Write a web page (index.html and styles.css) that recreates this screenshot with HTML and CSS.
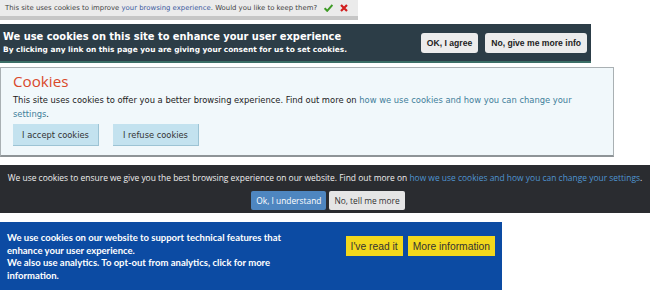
FILE: index.html
```html
<!DOCTYPE html>
<html lang="en">
<head>
    <meta charset="UTF-8">
    <meta name="viewport" content="width=device-width, initial-scale=1.0">
    <title>Cookie Banners</title>
    <link rel="stylesheet" href="styles.css">
</head>
<body>
    <div class="keep-bar">
        <span>This site uses cookies to improve <a href="#">your browsing experience</a>. Would you like to keep them?</span>
        <svg class="keep-icon" width="9" height="8" viewBox="0 0 9 8"><path d="M0.6 4.2 L3.2 6.8 L8.4 1" fill="none" stroke="#3d9b25" stroke-width="2"/></svg>
        <svg class="keep-icon" width="8" height="8" viewBox="0 0 8 8"><path d="M1 1 L7 7 M7 1 L1 7" fill="none" stroke="#d21f1f" stroke-width="2.2"/></svg>
    </div>

    <div class="slate-bar">
        <div class="slate-text">
            <h2>We use cookies on this site to enhance your user experience</h2>
            <p>By clicking any link on this page you are giving your consent for us to set cookies.</p>
        </div>
        <button class="slate-btn">OK, I agree</button>
        <button class="slate-btn">No, give me more info</button>
    </div>

    <div class="panel">
        <h2>Cookies</h2>
        <p>This site uses cookies to offer you a better browsing experience. Find out more on <a href="#">how we use cookies and how you can change your settings</a>.</p>
        <div class="panel-actions">
            <button class="panel-btn">I accept cookies</button>
            <button class="panel-btn">I refuse cookies</button>
        </div>
    </div>

    <div class="dark-bar">
        <p>We use cookies to ensure we give you the best browsing experience on our website. Find out more on <a href="#">how we use cookies and how you can change your settings</a>.</p>
        <div class="dark-actions">
            <button class="dark-btn dark-btn-ok">Ok, I understand</button>
            <button class="dark-btn">No, tell me more</button>
        </div>
    </div>

    <div class="blue-bar">
        <div class="blue-text">
            <p>We use cookies on our website to support technical features that enhance your user experience.</p>
            <p>We also use analytics. To opt-out from analytics, click for more information.</p>
        </div>
        <button class="blue-btn">I've read it</button>
        <button class="blue-btn">More information</button>
    </div>
</body>
</html>
```

FILE: styles.css
```css
html, body {
    margin: 0;
    background-color: #ffffff;
}

button {
    font-family: inherit;
    cursor: pointer;
    white-space: nowrap;
    flex-shrink: 0;
}

/* top strip */
.keep-bar {
    width: 358px;
    height: 20px;
    box-sizing: border-box;
    padding-left: 5px;
    background-color: #ebebeb;
    border-bottom: 4px solid #c6c6c6;
    display: flex;
    align-items: center;
    white-space: nowrap;
    font-family: "DejaVu Sans", sans-serif;
    font-size: 6.9px;
    color: #444;
}

.keep-bar a {
    color: #3b5aa0;
    text-decoration: none;
}

.keep-icon {
    flex-shrink: 0;
    margin-left: 7px;
}

/* slate banner */
.slate-bar {
    width: 591px;
    height: 39px;
    margin-top: 4px;
    box-sizing: border-box;
    padding-left: 3px;
    padding-right: 4px;
    background-color: #2c3d47;
    border-bottom: 2px solid #3b6e66;
    display: flex;
    align-items: center;
    gap: 7px;
    font-family: "DejaVu Sans", sans-serif;
    color: #fff;
}

.slate-text {
    flex: 1;
}

.slate-text h2 {
    margin: 0;
    font-size: 9.9px;
    line-height: 14px;
}

.slate-text p {
    margin: 0;
    font-size: 7.4px;
    font-weight: bold;
    line-height: 12px;
    white-space: nowrap;
}

.slate-btn {
    height: 20px;
    padding: 0 6px;
    border: none;
    border-radius: 3px;
    background-color: #ececec;
    color: #222;
    font-family: "Liberation Sans", Arial, sans-serif;
    font-weight: bold;
    font-size: 8.6px;
}

/* light panel */
.panel {
    width: 614px;
    height: 90px;
    margin-top: 4px;
    box-sizing: border-box;
    padding: 2px 12px 0 12px;
    background-color: #f1f8fb;
    border: 1px solid #a9b0b3;
    border-bottom: 2px solid #8e9497;
    font-family: "DejaVu Sans", sans-serif;
    color: #222;
}

.panel h2 {
    margin: 0;
    font-family: "Open Sans", sans-serif;
    font-weight: normal;
    font-size: 15.2px;
    line-height: 22px;
    color: #d9492b;
}

.panel p {
    margin: 1px 0 3px 0;
    font-size: 8.37px;
    line-height: 14px;
}

.panel a {
    color: #3f7e9a;
    text-decoration: none;
}

.panel-actions {
    display: flex;
    gap: 14px;
}

.panel-btn {
    width: 86px;
    height: 22px;
    padding: 0;
    border: none;
    border-right: 1px solid #9cc3d4;
    border-bottom: 1px solid #9cc3d4;
    background-color: #c3e2ef;
    color: #333;
    font-size: 8.3px;
}

/* dark banner */
.dark-bar {
    margin-top: 8px;
    height: 48px;
    box-sizing: border-box;
    padding-top: 7px;
    background-color: #2a2c30;
    text-align: center;
    font-family: "Open Sans", sans-serif;
    color: #eee;
}

.dark-bar p {
    margin: 0;
    font-size: 8.45px;
    line-height: 12px;
    white-space: nowrap;
}

.dark-bar a {
    color: #4f95d0;
    text-decoration: none;
}

.dark-actions {
    display: flex;
    justify-content: center;
    gap: 3px;
    margin-top: 7px;
    padding-left: 6px;
}

.dark-btn {
    height: 19px;
    padding: 0 5px;
    border: none;
    border-radius: 2px;
    background-color: #e5e5e5;
    color: #333;
    font-size: 8.4px;
}

.dark-btn-ok {
    background-color: #4e86c0;
    color: #fff;
}

/* blue banner */
.blue-bar {
    width: 502px;
    height: 68px;
    margin-top: 9px;
    box-sizing: border-box;
    padding: 10px 7px 0 7px;
    background-color: #0c4ba3;
    display: flex;
    align-items: flex-start;
    gap: 5px;
    font-family: Lato, sans-serif;
    color: #fff;
}

.blue-text {
    flex: 1;
    margin-right: 53px;
}

.blue-text p {
    margin: 0;
    font-size: 9.5px;
    font-weight: bold;
    line-height: 12.5px;
}

.blue-btn {
    height: 20px;
    margin-top: 4px;
    padding: 0 5px;
    border: none;
    background-color: #f3d81c;
    color: #333;
    font-family: "Liberation Sans", Arial, sans-serif;
    font-size: 10.3px;
}
```
